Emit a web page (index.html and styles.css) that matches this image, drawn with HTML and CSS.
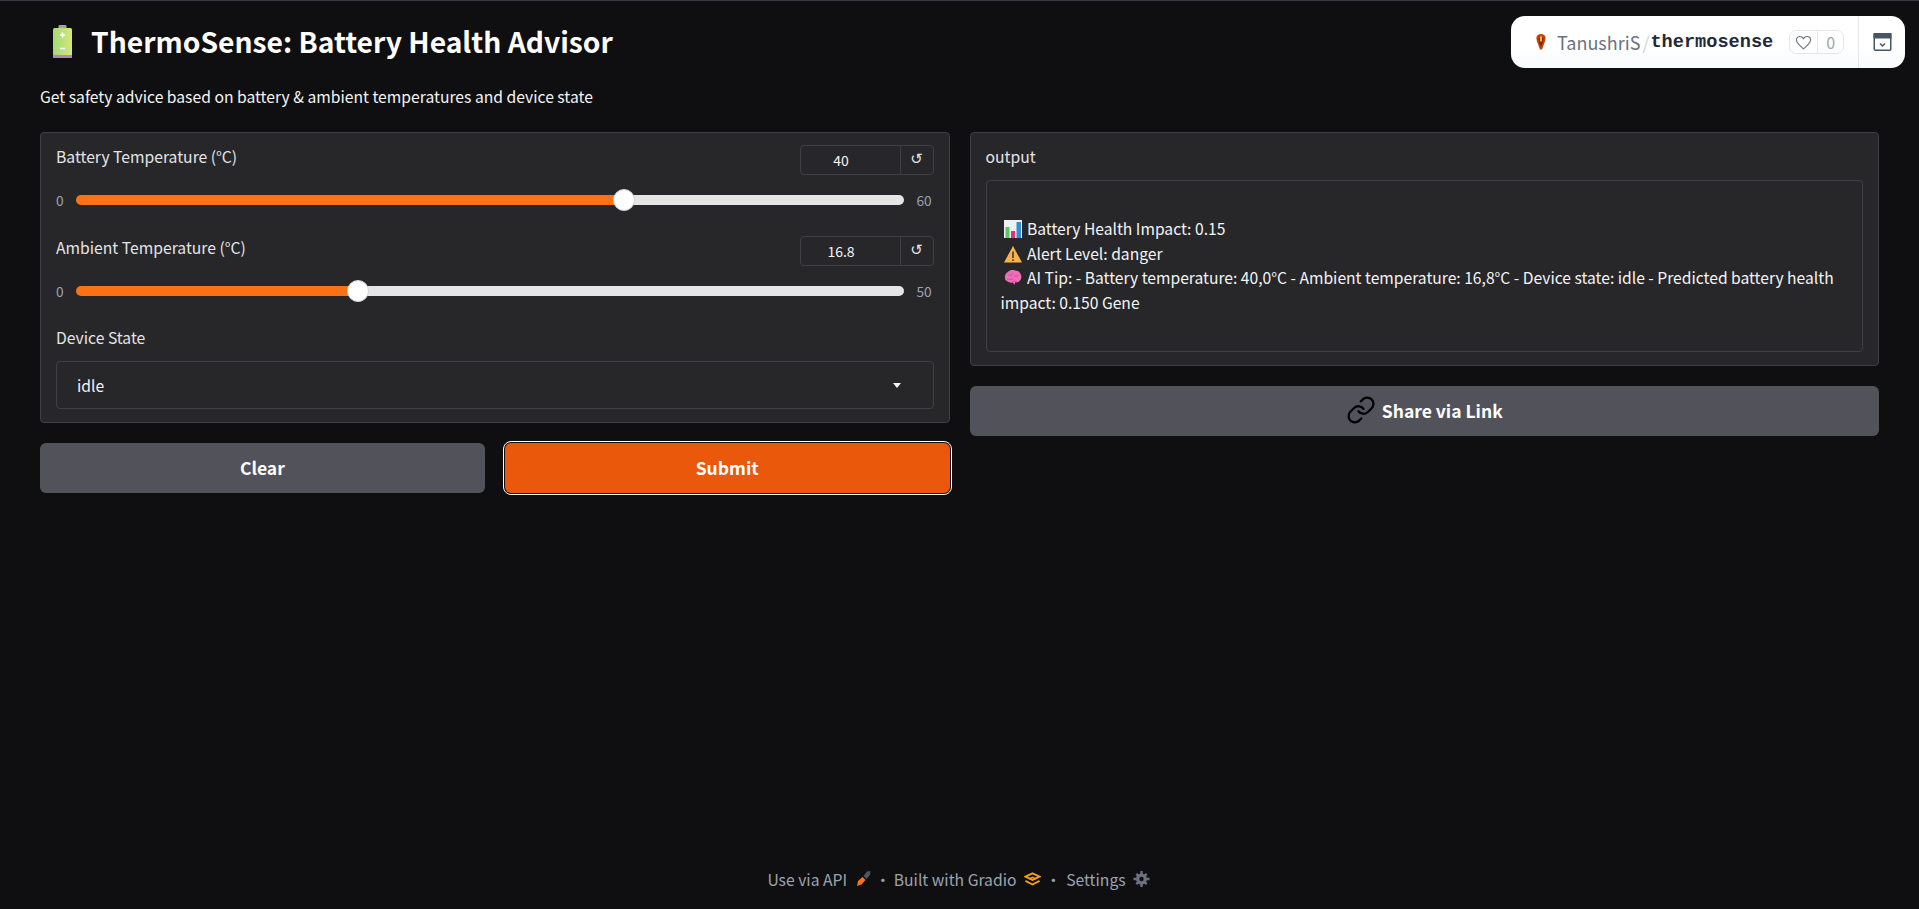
FILE: index.html
```html
<!DOCTYPE html>
<html lang="en">
<head>
    <meta charset="UTF-8">
    <meta name="viewport" content="width=device-width, initial-scale=1.0">
    <title>ThermoSense: Battery Health Advisor</title>
    <link rel="stylesheet" href="styles.css">
</head>
<body>
    <div class="hub-badge">
        <div class="hub-repo">
            <svg class="hub-avatar" viewBox="0 0 10 16">
                <path d="M0.500 3C1 1 3 0 5 0s4 1 4.500 3c.3 2-.5 5-1.500 7-.6 1.500-1 3-1.500 4.500L5 16l-1.500-1.500C3 13 2.600 11.500 2 10 1 8 .2 5 .5 3z" fill="#c2410c"/>
                <path d="M2.500 4h5L6.500 9 5 13 3.500 9z" fill="#7f1d1d"/>
                <rect x="4" y="2.500" width="2" height="5" fill="#fbbf24"/>
            </svg>
            <span class="hub-owner">TanushriS</span>
            <span class="hub-slash">/</span>
            <span class="hub-name">thermosense</span>
            <div class="hub-likes">
                <span class="hub-heart">
                    <svg viewBox="0 0 24 24" width="17" height="17"><path d="M12 21C6 16 2 12.500 2 8.500 2 5.500 4.300 3.500 7 3.500c2 0 3.800 1 5 3 1.200-2 3-3 5-3 2.700 0 5 2 5 5 0 4-4 7.500-10 12.500z" fill="none" stroke="#6b7280" stroke-width="1.600"/></svg>
                </span>
                <span class="hub-count">0</span>
            </div>
        </div>
        <div class="hub-app">
            <svg viewBox="0 0 18 18" width="19" height="18">
                <rect x="0.750" y="0.750" width="16.500" height="16.500" rx="1" fill="#fff" stroke="#475569" stroke-width="1.500"/>
                <rect x="0" y="0" width="18" height="5.500" fill="#475569"/>
                <path d="M6.500 10.500 9 13l2.500-2.500" fill="none" stroke="#475569" stroke-width="1.500"/>
            </svg>
        </div>
    </div>

    <header class="page-head">
        <h1 class="page-title">
            <svg class="title-icon" viewBox="0 0 19 33">
                <defs>
                    <linearGradient id="cell" x1="0" x2="1" y1="0" y2="0">
                        <stop offset="0" stop-color="#a3d977"/>
                        <stop offset="1" stop-color="#d4e87a"/>
                    </linearGradient>
                </defs>
                <rect x="5.500" y="0" width="8" height="4" rx="1" fill="#9ca3af"/>
                <rect x="0" y="3" width="19" height="30" rx="1.500" fill="url(#cell)"/>
                <rect x="0" y="30" width="19" height="3" fill="#a78bb5"/>
                <path d="M9.500 7.500v5M7 10h5M7 23.500h5" stroke="#fff" stroke-width="1.600"/>
            </svg>
            ThermoSense: Battery Health Advisor
        </h1>
        <p class="page-desc">Get safety advice based on battery &amp; ambient temperatures and device state</p>
    </header>

    <main class="columns">
        <section class="column">
            <div class="panel inputs">
                <div class="field">
                    <div class="field-head">
                        <label class="field-label">Battery Temperature (°C)</label>
                        <div class="number-box">
                            <input class="number-input" type="text" value="40">
                            <span class="reset-btn">↺</span>
                        </div>
                    </div>
                    <div class="slider-row">
                        <span class="slider-end">0</span>
                        <input class="slider" type="range" min="0" max="60" value="40" style="--fill: 66.67%">
                        <span class="slider-end">60</span>
                    </div>
                </div>

                <div class="field">
                    <div class="field-head">
                        <label class="field-label">Ambient Temperature (°C)</label>
                        <div class="number-box">
                            <input class="number-input" type="text" value="16.8">
                            <span class="reset-btn">↺</span>
                        </div>
                    </div>
                    <div class="slider-row">
                        <span class="slider-end">0</span>
                        <input class="slider" type="range" min="0" max="50" step="0.1" value="16.8" style="--fill: 33.6%">
                        <span class="slider-end">50</span>
                    </div>
                </div>

                <div class="field field-select">
                    <label class="field-label select-label">Device State</label>
                    <div class="dropdown">
                        <span>idle</span>
                        <span class="dropdown-arrow"></span>
                    </div>
                </div>
            </div>

            <div class="button-row">
                <button class="btn btn-secondary">Clear</button>
                <button class="btn btn-primary">Submit</button>
            </div>
        </section>

        <section class="column">
            <div class="panel output">
                <div class="output-label">output</div>
                <div class="output-box">
                    <div class="output-line">
                        <svg class="emoji" viewBox="0 0 18 18">
                            <rect width="18" height="18" fill="#eef0f2"/>
                            <rect x="1.500" y="7" width="4" height="11" fill="#5cc46a"/>
                            <rect x="7" y="11" width="4" height="7" fill="#e8326f"/>
                            <rect x="12.500" y="2" width="4.500" height="16" fill="#2f8fd0"/>
                        </svg>
                        Battery Health Impact: 0.15
                    </div>
                    <div class="output-line">
                        <svg class="emoji" viewBox="0 0 18 18">
                            <path d="M9 1 18 17.500H0z" fill="#f7b24c"/>
                            <path d="M9 6.500v6.500M9 14.300v1.700" stroke="#4b3a22" stroke-width="1.600"/>
                        </svg>
                        Alert Level: danger
                    </div>
                    <div class="output-line">
                        <svg class="emoji" viewBox="0 0 18 18">
                            <path d="M1 9c-.5-3 1-5 3-6 1.500-2 5-2.500 7-1.500 3 0 5 1.500 6 4.500 1 2.500 0 5-2 6.500-1 1-3 1-4 1l-.5 2.500-1.500-2.500c-2 .5-4.500 0-6-1.500C1.500 11.500 1 10.500 1 9z" fill="#f06eb4"/>
                            <path d="M4 6c2 1 4 0 5-2M3 10c2 0 4 1 6 0M10 7c2 1 3 0 5-1M8 13c1-1 4-1 5 0" fill="none" stroke="#d24f9c" stroke-width="1"/>
                        </svg>
                        AI Tip: - Battery temperature: 40,0°C - Ambient temperature: 16,8°C - Device state: idle - Predicted battery health impact: 0.150 Gene
                    </div>
                </div>
            </div>

            <button class="btn btn-secondary btn-share">
                <svg viewBox="0 0 24 24" width="30" height="30" fill="none" stroke="#000" stroke-width="1.800" stroke-linecap="round" stroke-linejoin="round">
                    <path d="M10 13a5 5 0 0 0 7.540.540l3-3a5 5 0 0 0-7.070-7.070l-1.720 1.710"/>
                    <path d="M14 11a5 5 0 0 0-7.540-.540l-3 3a5 5 0 0 0 7.070 7.070l1.710-1.710"/>
                </svg>
                Share via Link
            </button>
        </section>
    </main>

    <footer class="page-foot">
        <span>Use via API</span>
        <svg class="foot-icon rocket" viewBox="0 0 16 16">
            <path d="M7 6 10 9 6 13.500 1.500 15l1-5z" fill="#f97316"/>
            <path d="M8 5l3.500-4.500L15 0l-.500 4L11 8z" fill="#4b5563"/>
        </svg>
        <span class="foot-dot">·</span>
        <span>Built with Gradio</span>
        <svg class="foot-icon" viewBox="0 0 18 14">
            <path d="M9 1 16.500 4.500 9 8 1.500 4.500z M1.500 9 9 12.800 16.500 9" fill="none" stroke="#f59e0b" stroke-width="2"/>
            <path d="M5.500 7 9 5.200 12.500 7" fill="none" stroke="#f59e0b" stroke-width="1.600"/>
        </svg>
        <span class="foot-dot foot-dot-wide">·</span>
        <span>Settings</span>
        <svg class="foot-icon gear" viewBox="0 0 16 16">
            <path d="M8 2.500a5.500 5.500 0 1 0 0 11 5.500 5.500 0 0 0 0-11zm0 3.300a2.200 2.200 0 1 1 0 4.400 2.200 2.200 0 0 1 0-4.400z" fill="#6b7280" fill-rule="evenodd"/>
            <path d="M6.800 0h2.400v3H6.800zM6.800 13h2.400v3H6.800zM0 6.800h3v2.400H0zM13 6.800h3v2.400h-3zM2 3.700 3.700 2l2 2L4 5.700zM10.300 12l1.700-1.700 2 2-1.700 1.700zM2 12.300 4 10.300 5.700 12l-2 2zM10.300 4l2-2L14 3.700l-2 2z" fill="#6b7280"/>
        </svg>
    </footer>
</body>
</html>
```

FILE: styles.css
```css
* {
    box-sizing: border-box;
}

body {
    display: flex;
    flex-direction: column;
    min-height: 909px;
    margin: 0;
    padding: 0 40px;
    border-top: 1px solid #3a3a44;
    font-family: "Noto Sans CJK SC", "Noto Sans", sans-serif;
    font-size: 15.700px;
    background-color: #0f0f11;
    color: #f4f4f5;
}

/* Header */
.page-head {
    padding-top: 21px;
}

.page-title {
    display: flex;
    align-items: center;
    gap: 19px;
    height: 38px;
    margin: 0;
    padding-left: 13px;
    font-size: 28.250px;
    font-weight: 600;
    line-height: 38px;
    color: #fff;
}

.title-icon {
    width: 19px;
    height: 33px;
}

.page-desc {
    margin: 25px 0 0;
    font-size: 15.700px;
    line-height: 24px;
}

/* Columns */
.columns {
    display: flex;
    gap: 20px;
    margin-top: 23px;
}

.column {
    flex: 1;
    display: flex;
    flex-direction: column;
    gap: 20px;
}

.panel {
    background-color: #27272a;
    border: 1px solid #3f3f46;
    border-radius: 4px;
}

.inputs {
    padding: 12px 15px 13px;
}

/* Fields */
.field + .field {
    margin-top: 25px;
}

.field + .field-select {
    margin-top: 24px;
}

.field-head {
    display: flex;
    justify-content: space-between;
    align-items: flex-start;
}

.field-label {
    font-size: 15.700px;
    line-height: 24px;
    color: #e4e4e7;
}

.number-box {
    display: flex;
    width: 134px;
    height: 30px;
    border: 1px solid #3f3f46;
    border-radius: 4px;
    background-color: #27272a;
}

.number-input {
    width: 100px;
    padding: 0 18px 0 0;
    border: none;
    border-right: 1px solid #3f3f46;
    background: transparent;
    font-family: inherit;
    font-size: 14px;
    font-weight: 400;
    text-align: center;
    color: #f4f4f5;
}

.reset-btn {
    flex: 1;
    font-family: "DejaVu Sans", sans-serif;
    font-size: 15px;
    line-height: 27px;
    text-align: center;
    color: #e4e4e7;
}

.slider-row {
    display: flex;
    align-items: center;
    height: 22px;
    margin-top: 14px;
}

.slider-end {
    width: 20px;
    font-size: 13.700px;
    color: #9ca3af;
}

.slider-end:last-child {
    width: 30px;
    padding-left: 13px;
}

.slider {
    flex: 1;
    appearance: none;
    -webkit-appearance: none;
    height: 10px;
    margin: 0;
    border-radius: 5px;
    background: linear-gradient(#f97316, #f97316) no-repeat, #e5e5e5;
    background-size: var(--fill) 100%;
}

.slider::-webkit-slider-thumb {
    -webkit-appearance: none;
    width: 22px;
    height: 22px;
    border-radius: 50%;
    border: 1px solid #d4d4d8;
    background-color: #fff;
}

.select-label {
    display: block;
    margin-bottom: 11px;
}

.dropdown {
    display: flex;
    justify-content: space-between;
    align-items: center;
    height: 48px;
    padding: 0 32px 0 20px;
    border: 1px solid #3f3f46;
    border-radius: 4px;
}

.dropdown-arrow {
    width: 0;
    height: 0;
    border-left: 4px solid transparent;
    border-right: 4px solid transparent;
    border-top: 5px solid #f4f4f5;
}

/* Buttons */
.button-row {
    display: flex;
    gap: 20px;
}

.btn {
    display: flex;
    justify-content: center;
    align-items: center;
    gap: 6px;
    flex: 1;
    height: 50px;
    padding: 0 0 2px;
    border: none;
    border-radius: 6px;
    font-family: inherit;
    font-size: 17.500px;
    font-weight: 600;
    color: #fff;
}

.btn-secondary {
    background-color: #52525b;
}

.btn-primary {
    background-color: #ea580c;
    outline: 1px solid #fff;
    outline-offset: 1px;
}

.btn-share {
    flex: none;
}

/* Output */
.output {
    padding: 12px 15px 13px;
}

.output-label {
    font-size: 15.700px;
    line-height: 24px;
    color: #e4e4e7;
}

.output-box {
    margin-top: 11px;
    padding: 36px 14px;
    border: 1px solid #3f3f46;
    border-radius: 4px;
    font-size: 15.650px;
    line-height: 24.500px;
}

.emoji {
    width: 18px;
    height: 18px;
    margin: 0 2px 0 3px;
    vertical-align: -3px;
}

/* Footer */
.page-foot {
    display: flex;
    justify-content: center;
    align-items: center;
    margin-top: auto;
    height: 60px;
    padding-right: 2px;
    color: #9ca3af;
}

.foot-icon {
    width: 17px;
    height: 14px;
    margin-left: 7px;
}

.rocket {
    margin-left: 8px;
    height: 16px;
}

.gear {
    height: 16px;
}

.foot-dot {
    margin: 0 3px;
}

.foot-dot-wide {
    margin: 0 5px;
}

/* Hub badge sits over the page */
.hub-badge {
    position: absolute;
    top: 16px;
    right: 14px;
    display: flex;
    width: 394px;
    height: 52px;
    border-radius: 14px;
    background: linear-gradient(#fff 55%, #f8fafc);
}

.hub-repo {
    display: flex;
    align-items: center;
    flex: 1;
    padding-left: 25px;
    border-right: 1px solid #e5e7eb;
}

.hub-avatar {
    width: 10px;
    height: 16px;
    margin-right: 11px;
}

.hub-owner {
    font-size: 18px;
    color: #6b7280;
}

.hub-slash {
    margin: 0 1px 0 2px;
    font-size: 18px;
    color: #d1d5db;
}

.hub-name {
    font-family: "Liberation Mono", monospace;
    font-size: 18.600px;
    font-weight: 700;
    color: #1f2937;
}

.hub-likes {
    display: flex;
    align-items: center;
    height: 24px;
    margin-left: 16px;
    border: 1px solid #e5e7eb;
    border-radius: 7px;
}

.hub-heart {
    display: flex;
    justify-content: center;
    align-items: center;
    width: 28px;
    height: 100%;
    border-right: 1px solid #e5e7eb;
}

.hub-count {
    width: 25px;
    font-size: 16px;
    line-height: 20px;
    text-align: center;
    color: #9ca3af;
}

.hub-app {
    display: flex;
    justify-content: center;
    align-items: center;
    width: 46px;
}
```
